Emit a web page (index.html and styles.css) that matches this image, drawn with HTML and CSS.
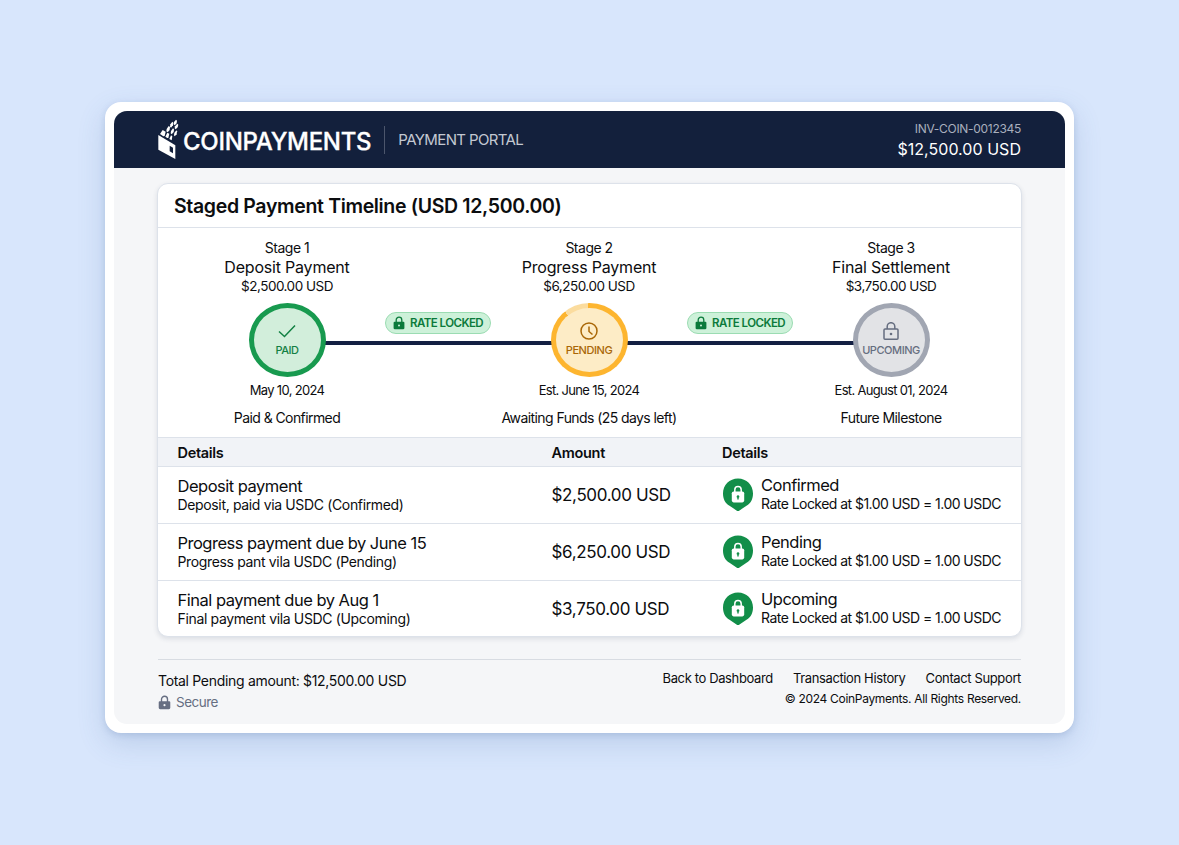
FILE: index.html
```html
<!DOCTYPE html>
<html lang="en">
<head>
    <meta charset="UTF-8">
    <title>CoinPayments - Payment Portal</title>
    <link rel="stylesheet" href="styles.css">
</head>

<body>
    <svg class="symbols">
        <symbol id="lock" viewBox="0 0 12 14">
            <path d="M3.2 6.5V4a2.8 2.8 0 0 1 5.6 0v2.5" fill="none" stroke="currentColor" stroke-width="1.3"/>
            <path fill-rule="evenodd" fill="currentColor" d="M1.6 5.8h8.8a1 1 0 0 1 1 1V12a1.3 1.3 0 0 1-1.3 1.3H1.9A1.3 1.3 0 0 1 .6 12V6.8a1 1 0 0 1 1-1zM6 8.5a1 1 0 1 0 0 2 1 1 0 0 0 0-2z"/>
        </symbol>
        <symbol id="shield" viewBox="0 0 32 34">
            <path fill="#128e49" d="M16 .5C24.5 .5 31 7 31 15.5c0 5.5-2 9.5-6.5 12.3L17.5 32.4a2.6 2.6 0 0 1-3 0L7.5 27.8C3 25 1 21 1 15.5 1 7 7.5 .5 16 .5z"/>
            <path d="M12.8 14v-2.2a3.2 3.2 0 0 1 6.4 0V14" fill="none" stroke="#fff" stroke-width="1.5"/>
            <rect x="9.8" y="13.4" width="12.4" height="11" rx="1.8" fill="#fff"/>
            <path fill="#128e49" d="M16 17.2a1.4 1.4 0 0 1 .7 2.6v1.7h-1.4v-1.7a1.4 1.4 0 0 1 .7-2.6z"/>
        </symbol>
    </svg>

    <div class="frame">
        <div class="portal">
            <header>
                <svg class="logo" viewBox="0 0 66 123">
                    <g fill="#fff">
                        <path d="M4 48l51 31v41L4 92z"/>
                        <path d="M9 45l8-12 9 5-3 13-4 1z"/>
                        <path d="M25 53l6-12 6 3-3 13-3 0z"/>
                        <path d="M37 60l5-11 4 3-2 12z"/>
                        <path d="M29 30l6-9 4 3-1 9-6 7-4-3z"/>
                        <path d="M42 36l6-8 3 3-1 8-6 7-3-3z"/>
                        <path d="M40 16l6-8 3 3-1 8-6 7-3-3z"/>
                        <path d="M51 9l6-7 3 3-1 8-6 6-3-3z"/>
                        <path d="M54 22l7-8 3 3-2 8-6 6-3-3z"/>
                        <path d="M52 42l6-8 2 3-1 9-6 6-2-3z"/>
                    </g>
                    <path fill="#13203c" d="M38 80l10 6v17l-10-6z"/>
                </svg>
                <h1>COINPAYMENTS</h1>
                <span class="portal-name">PAYMENT PORTAL</span>
                <div class="invoice">
                    <p class="invoice-id">INV-COIN-0012345</p>
                    <p class="invoice-total">$12,500.00 USD</p>
                </div>
            </header>

            <main>
                <h2>Staged Payment Timeline (USD 12,500.00)</h2>

                <section class="timeline">
                    <article class="stage">
                        <p class="stage-number">Stage 1</p>
                        <h3>Deposit Payment</h3>
                        <p class="stage-amount">$2,500.00 USD</p>
                        <div class="circle paid">
                            <svg width="20" height="18" viewBox="0 0 20 18"><path d="M2 9.5l5.5 5L18 3.500" fill="none" stroke="currentColor" stroke-width="1.5"/></svg>
                            <span>PAID</span>
                        </div>
                        <p class="date">May 10, 2024</p>
                        <p class="status">Paid &amp; Confirmed</p>
                    </article>
                    <div class="connector">
                        <span class="badge"><svg width="12" height="14"><use href="#lock"/></svg>RATE LOCKED</span>
                    </div>
                    <article class="stage">
                        <p class="stage-number">Stage 2</p>
                        <h3>Progress Payment</h3>
                        <p class="stage-amount">$6,250.00 USD</p>
                        <div class="circle pending">
                            <svg width="18" height="18" viewBox="0 0 18 18" fill="none" stroke="currentColor" stroke-width="1.5"><circle cx="9" cy="9" r="8"/><path d="M9 4.5V9.5l3.500 3"/></svg>
                            <span>PENDING</span>
                        </div>
                        <p class="date">Est. June 15, 2024</p>
                        <p class="status">Awaiting Funds (25 days left)</p>
                    </article>
                    <div class="connector">
                        <span class="badge"><svg width="12" height="14"><use href="#lock"/></svg>RATE LOCKED</span>
                    </div>
                    <article class="stage">
                        <p class="stage-number">Stage 3</p>
                        <h3>Final Settlement</h3>
                        <p class="stage-amount">$3,750.00 USD</p>
                        <div class="circle upcoming">
                            <svg width="16" height="18" viewBox="0 0 16 18" fill="none" stroke="currentColor" stroke-width="1.5"><rect x="1" y="7" width="14" height="10.2" rx="1"/><path d="M4.2 7V4.5a3.8 3.8 0 0 1 7.6 0V7"/><circle cx="8" cy="12" r="1.3" fill="currentColor" stroke="none"/></svg>
                            <span>UPCOMING</span>
                        </div>
                        <p class="date">Est. August 01, 2024</p>
                        <p class="status">Future Milestone</p>
                    </article>
                </section>

                <section class="details">
                    <div class="row head">
                        <span>Details</span>
                        <span>Amount</span>
                        <span>Details</span>
                    </div>
                    <div class="row">
                        <div>
                            <h4>Deposit payment</h4>
                            <p>Deposit, paid via USDC (Confirmed)</p>
                        </div>
                        <span class="amount">$2,500.00 USD</span>
                        <div class="rate">
                            <svg width="32" height="34"><use href="#shield"/></svg>
                            <div>
                                <h4>Confirmed</h4>
                                <p>Rate Locked at $1.00 USD = 1.00 USDC</p>
                            </div>
                        </div>
                    </div>
                    <div class="row">
                        <div>
                            <h4>Progress payment due by June 15</h4>
                            <p>Progress pant vila USDC (Pending)</p>
                        </div>
                        <span class="amount">$6,250.00 USD</span>
                        <div class="rate">
                            <svg width="32" height="34"><use href="#shield"/></svg>
                            <div>
                                <h4>Pending</h4>
                                <p>Rate Locked at $1.00 USD = 1.00 USDC</p>
                            </div>
                        </div>
                    </div>
                    <div class="row">
                        <div>
                            <h4>Final payment due by Aug 1</h4>
                            <p>Final payment vila USDC (Upcoming)</p>
                        </div>
                        <span class="amount">$3,750.00 USD</span>
                        <div class="rate">
                            <svg width="32" height="34"><use href="#shield"/></svg>
                            <div>
                                <h4>Upcoming</h4>
                                <p>Rate Locked at $1.00 USD = 1.00 USDC</p>
                            </div>
                        </div>
                    </div>
                </section>
            </main>

            <footer>
                <div>
                    <p class="total">Total Pending amount: $12,500.00 USD</p>
                    <p class="secure"><svg width="13" height="15"><use href="#lock"/></svg>Secure</p>
                </div>
                <div class="footer-right">
                    <nav>
                        <a href="#">Back to Dashboard</a>
                        <a href="#">Transaction History</a>
                        <a href="#">Contact Support</a>
                    </nav>
                    <p class="copyright">© 2024 CoinPayments. All Rights Reserved.</p>
                </div>
            </footer>
        </div>
    </div>
</body>
</html>
```
FILE: styles.css
```css
* {
    box-sizing: border-box;
    margin: 0;
}

body {
    height: 845px;
    padding: 102px 105px;
    background-color: #d8e6fc;
    font-family: Inter, sans-serif;
    color: #0c0d0f;
    overflow: hidden;
}

.symbols {
    display: none;
}

svg {
    display: block;
    flex-shrink: 0;
}

.frame {
    height: 631px;
    padding: 9px;
    background-color: white;
    border-radius: 16px;
    box-shadow: 0 10px 28px rgba(70, 105, 160, 0.2), 0 2px 6px rgba(70, 105, 160, 0.18);
}

.portal {
    height: 613px;
    background-color: #f5f6f8;
    border-radius: 13px;
    overflow: hidden;
}

/* header */

header {
    display: flex;
    align-items: center;
    height: 57px;
    padding: 0 44px 0 43px;
    background-color: #13203c;
    color: white;
}

.logo {
    width: 22px;
    height: 41px;
    margin-bottom: 1px;
}

h1 {
    margin: 4px 0 0 4px;
    font-size: 24px;
    font-weight: 500;
    line-height: 30px;
    letter-spacing: -0.3px;
    -webkit-text-stroke: 0.3px white;
}

.portal-name {
    height: 28px;
    margin-left: 13px;
    padding-left: 13px;
    border-left: 1px solid #4c566c;
    font-size: 15px;
    line-height: 28px;
    letter-spacing: -0.62px;
    color: #c3c8d2;
}

.invoice {
    margin: 0 0 2px auto;
    text-align: right;
    line-height: 21px;
}

.invoice-id {
    font-size: 12px;
    letter-spacing: -0.3px;
    color: #a9afbd;
}

.invoice-total {
    font-size: 16px;
    letter-spacing: 0.04px;
}

/* card */

main {
    height: 454px;
    margin: 15px 43px 0;
    border: 1px solid #dde2ea;
    border-radius: 11px;
    background-color: white;
    box-shadow: 0 2px 5px rgba(30, 50, 80, 0.12);
    overflow: hidden;
}

h2 {
    height: 44px;
    padding-left: 16px;
    border-bottom: 1px solid #dde2ea;
    font-size: 19.5px;
    font-weight: 600;
    line-height: 45px;
    letter-spacing: -0.34px;
}

.timeline {
    display: flex;
    height: 209px;
    padding: 11px 40px 0 39px;
}

.stage {
    display: flex;
    flex-direction: column;
    align-items: center;
    width: 180px;
    white-space: nowrap;
    line-height: 19px;
}

.stage-number {
    font-size: 14px;
    line-height: 18px;
    letter-spacing: -0.5px;
}

h3 {
    font-size: 16px;
    font-weight: 400;
    line-height: 20px;
    letter-spacing: -0.2px;
}

.stage-amount {
    font-size: 13.5px;
    letter-spacing: -0.5px;
}

.circle {
    display: flex;
    flex-direction: column;
    align-items: center;
    width: 77px;
    height: 74px;
    margin-top: 7px;
    padding-top: 14px;
    border: 5px solid;
    border-radius: 50%;
    z-index: 1;
}

.circle span {
    font-size: 11px;
    font-weight: 500;
    letter-spacing: -0.45px;
    line-height: 20px;
}

.paid {
    background-color: #d2eedb;
    border-color: #189a4f;
    color: #128043;
}

.pending {
    border-color: transparent;
    background: linear-gradient(#fdecc6, #fdecc6) padding-box,
        conic-gradient(#fdb52f 0deg 319deg, #fbdc9e 319deg 358deg, #fdb52f 358deg) border-box;
    color: #a96707;
}

.upcoming {
    background-color: #e2e3e6;
    border-color: #a1a6b2;
    color: #666e80;
}

.date {
    margin-top: 4px;
    font-size: 13px;
    letter-spacing: -0.68px;
}

.status {
    margin-top: 8px;
    font-size: 14px;
    letter-spacing: -0.58px;
}

.connector {
    flex: 1;
    display: flex;
    flex-direction: column;
    align-items: center;
    height: 106px;
    margin: 0 -53px;
    padding-top: 73px;
    border-bottom: 4px solid #131f42;
}

.badge {
    display: flex;
    align-items: center;
    gap: 5px;
    width: 106px;
    height: 22px;
    padding-left: 7px;
    border: 1px solid #9bdcb2;
    border-radius: 11px;
    background-color: #cdf1d9;
    color: #0b7a3b;
    font-size: 11.5px;
    font-weight: 600;
    letter-spacing: -0.55px;
    white-space: nowrap;
}

/* table */

.row {
    display: grid;
    grid-template-columns: 374px 170.5px 1fr;
    align-items: center;
    height: 57px;
    padding-left: 19.5px;
    border-top: 1px solid #dde2ea;
}

.head {
    height: 29px;
    background-color: #f1f3f7;
    font-size: 14.5px;
    font-weight: 600;
    letter-spacing: -0.3px;
}

h4 {
    font-size: 16.5px;
    font-weight: 400;
    line-height: 19px;
    letter-spacing: -0.5px;
}

.row p {
    margin-top: -1px;
    font-size: 14px;
    line-height: 19px;
    letter-spacing: -0.35px;
}

.amount {
    font-size: 17px;
    letter-spacing: -0.35px;
}

.rate {
    display: flex;
    align-items: center;
    gap: 7px;
}

.rate div {
    margin-bottom: 1px;
}

.rate p {
    letter-spacing: -0.54px;
}

/* footer */

footer {
    display: flex;
    justify-content: space-between;
    margin: 22px 44px 0;
    padding-top: 10px;
    border-top: 1px solid #d8dce2;
}

.total {
    font-size: 14px;
    line-height: 22px;
    letter-spacing: -0.31px;
}

.secure {
    display: flex;
    align-items: center;
    gap: 5px;
    font-size: 13.5px;
    line-height: 21px;
    letter-spacing: -0.5px;
    color: #666e82;
}

.footer-right {
    text-align: right;
}

nav {
    display: flex;
    justify-content: flex-end;
    gap: 20px;
}

a {
    font-size: 13px;
    line-height: 17px;
    letter-spacing: -0.37px;
    color: inherit;
    text-decoration: none;
}

.copyright {
    margin-top: 1px;
    font-size: 12px;
    line-height: 21px;
    letter-spacing: -0.31px;
}

.rate .rate p {
    letter-spacing: -0.54px;
}

.row .rate p {
    letter-spacing: -0.54px;
}
```
